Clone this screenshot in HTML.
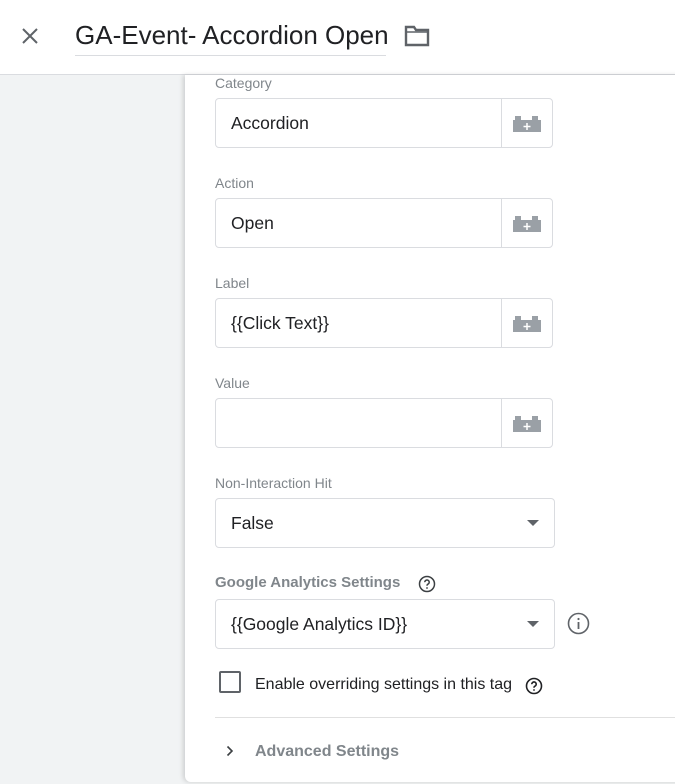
<!DOCTYPE html>
<html><head><style>
body{margin:0;width:675px;height:784px;overflow:hidden;background:#f1f3f4;font-family:"Liberation Sans",Arial,sans-serif;position:relative}
.hdr{position:absolute;left:0;top:0;width:675px;height:74px;background:#fff;border-bottom:1px solid #dadce0}
.card{position:absolute;left:185px;top:75px;width:500px;height:707px;background:#fff;box-shadow:-2px 0 5px rgba(0,0,0,.15);border-radius:0 0 0 6px}
.lbl{position:absolute;left:215px;font-size:14px;color:#80868b}
.box{position:absolute;left:215px;width:336px;height:48px;border:1px solid #dadce0;border-radius:4px;background:#fff}
.box .t{position:absolute;left:15px;top:14px;font-size:17.5px;color:#202124}
.box .sep{position:absolute;left:285px;top:0;width:1px;height:48px;background:#dadce0}
.brick{position:absolute;left:297px;top:17px}
.dd{width:338px}
.arrow{position:absolute;right:15px;top:21px;width:0;height:0;border-left:6px solid transparent;border-right:6px solid transparent;border-top:6px solid #5f6368}
</style></head><body>
<div class="hdr">
<svg style="position:absolute;left:21px;top:27px" width="18" height="18" viewBox="0 0 18 18"><path d="M2 2L16 16M16 2L2 16" stroke="#5f6368" stroke-width="2"/></svg>
<div style="position:absolute;left:75px;top:20px;font-size:26px;color:#202124;white-space:nowrap">GA-Event- Accordion Open</div>
<div style="position:absolute;left:75px;top:55px;width:311px;height:1px;background:#dadce0"></div>
<svg style="position:absolute;left:404px;top:25px" width="26" height="22" viewBox="0 0 26 22"><path d="M2 2H10L12 5H24V20H2Z" fill="none" stroke="#5f6368" stroke-width="2.4"/><path d="M2 7H24" stroke="#5f6368" stroke-width="1.5"/></svg>
</div>
<div class="card"></div>

<div class="lbl" style="top:75px">Category</div>
<div class="box" style="top:98px"><div class="t">Accordion</div><div class="sep"></div>
<svg class="brick" width="28" height="16"><rect x="0" y="4" width="28" height="12" fill="#9aa0a6"/><rect x="2" y="0" width="6" height="5" fill="#9aa0a6"/><rect x="19" y="0" width="6" height="5" fill="#9aa0a6"/><path d="M14 7V14M10.5 10.5H17.5" stroke="#fff" stroke-width="1.5"/></svg></div>

<div class="lbl" style="top:175px">Action</div>
<div class="box" style="top:198px"><div class="t">Open</div><div class="sep"></div>
<svg class="brick" width="28" height="16"><rect x="0" y="4" width="28" height="12" fill="#9aa0a6"/><rect x="2" y="0" width="6" height="5" fill="#9aa0a6"/><rect x="19" y="0" width="6" height="5" fill="#9aa0a6"/><path d="M14 7V14M10.5 10.5H17.5" stroke="#fff" stroke-width="1.5"/></svg></div>

<div class="lbl" style="top:275px">Label</div>
<div class="box" style="top:298px"><div class="t">{{Click Text}}</div><div class="sep"></div>
<svg class="brick" width="28" height="16"><rect x="0" y="4" width="28" height="12" fill="#9aa0a6"/><rect x="2" y="0" width="6" height="5" fill="#9aa0a6"/><rect x="19" y="0" width="6" height="5" fill="#9aa0a6"/><path d="M14 7V14M10.5 10.5H17.5" stroke="#fff" stroke-width="1.5"/></svg></div>

<div class="lbl" style="top:375px">Value</div>
<div class="box" style="top:398px"><div class="sep"></div>
<svg class="brick" width="28" height="16"><rect x="0" y="4" width="28" height="12" fill="#9aa0a6"/><rect x="2" y="0" width="6" height="5" fill="#9aa0a6"/><rect x="19" y="0" width="6" height="5" fill="#9aa0a6"/><path d="M14 7V14M10.5 10.5H17.5" stroke="#fff" stroke-width="1.5"/></svg></div>

<div class="lbl" style="top:475px">Non-Interaction Hit</div>
<div class="box dd" style="top:498px"><div class="t">False</div><div class="arrow"></div></div>

<div class="lbl" style="top:574px;font-size:15px;font-weight:bold;color:#80868b">Google Analytics Settings</div>
<svg style="position:absolute;left:418px;top:575px" width="18" height="18" viewBox="0 0 18 18"><circle cx="9" cy="9" r="7.5" fill="none" stroke="#3c4043" stroke-width="1.5"/><path d="M6.8 7.2a2.2 2.2 0 1 1 3 2c-.7.3-.8.8-.8 1.6" fill="none" stroke="#3c4043" stroke-width="1.5"/><circle cx="9" cy="13" r=".9" fill="#3c4043"/></svg>
<div class="box dd" style="top:599px"><div class="t">{{Google Analytics ID}}</div><div class="arrow"></div></div>
<svg style="position:absolute;left:567px;top:612px" width="23" height="23" viewBox="0 0 23 23"><circle cx="11.5" cy="11.5" r="10" fill="none" stroke="#5f6368" stroke-width="1.6"/><path d="M11.5 10V17" stroke="#5f6368" stroke-width="1.8"/><circle cx="11.5" cy="7" r="1.1" fill="#5f6368"/></svg>

<div style="position:absolute;left:219px;top:671px;width:18px;height:18px;border:2px solid #5f6368;border-radius:2px"></div>
<div style="position:absolute;left:255px;top:676px;font-size:16px;color:#202124;white-space:nowrap">Enable overriding settings in this tag</div>
<svg style="position:absolute;left:525px;top:677px" width="18" height="18" viewBox="0 0 18 18"><circle cx="9" cy="9" r="7.5" fill="none" stroke="#202124" stroke-width="1.6"/><path d="M6.8 7.2a2.2 2.2 0 1 1 3 2c-.7.3-.8.8-.8 1.6" fill="none" stroke="#202124" stroke-width="1.6"/><circle cx="9" cy="13" r=".9" fill="#202124"/></svg>

<div style="position:absolute;left:215px;top:717px;width:460px;height:1px;background:#e0e0e0"></div>
<svg style="position:absolute;left:226px;top:745px" width="8" height="12" viewBox="0 0 8 12"><path d="M1.5 1.5L6 6L1.5 10.5" fill="none" stroke="#3c4043" stroke-width="1.6"/></svg>
<div style="position:absolute;left:255px;top:743px;font-size:16px;font-weight:bold;color:#80868b">Advanced Settings</div>
</body></html>
